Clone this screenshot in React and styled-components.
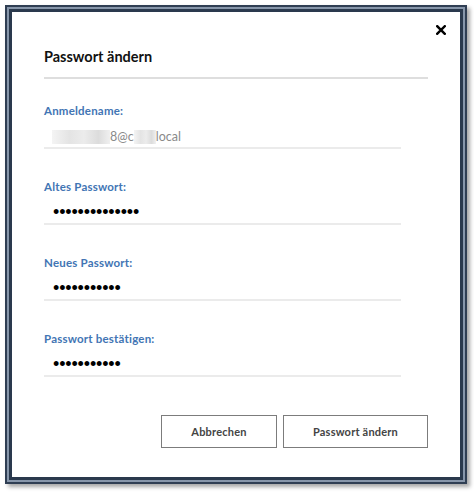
import React from "react";
import styled, { createGlobalStyle } from "styled-components";

const Global = createGlobalStyle`
  html, body { margin: 0; padding: 0; background: #ffffff; }
  body { font-family: Lato, "Open Sans", Arial, sans-serif; }
`;

const Page = styled.div`
  width: 474px;
  height: 493px;
  padding: 5px;
  box-sizing: border-box;
`;

const Frame = styled.div`
  position: relative;
  width: 462px;
  height: 479px;
  box-sizing: border-box;
  border: 2px solid #2f3e53;
  background: #ffffff;
  box-shadow: inset 0 0 0 2px #8796aa, inset 0 0 0 5px #2a394d,
    3px 3px 4px rgba(0, 0, 0, 0.35);
  padding: 5px;
  display: flex;
  flex-direction: column;
`;

const Inner = styled.div`
  padding: 0 32px;
  display: flex;
  flex-direction: column;
  flex: 1;
`;

const CloseButton = styled.button`
  position: absolute;
  top: 16px;
  right: 18px;
  width: 13px;
  height: 13px;
  padding: 0;
  border: 0;
  background: transparent;
  display: flex;
  align-items: center;
  justify-content: center;
  cursor: pointer;
`;

const Header = styled.div`
  padding: 35px 0 10px;
  border-bottom: 2px solid #dedede;
`;

const Title = styled.h2`
  margin: 0;
  font-size: 14.5px;
  line-height: 20px;
  font-weight: 700;
  color: #111;
`;

const Fields = styled.div`
  display: flex;
  flex-direction: column;
  gap: 31px;
  padding-top: 25px;
  width: 357px;
`;

const Field = styled.div`
  display: flex;
  flex-direction: column;
  border-bottom: 2px solid #ebebeb;
`;

const Label = styled.label`
  font-size: 11.5px;
  letter-spacing: 0.2px;
  line-height: 14px;
  font-weight: 700;
  color: #4275b4;
`;

const Value = styled.div`
  margin-top: 8px;
  height: 21px;
  padding-left: 8px;
  display: flex;
  align-items: center;
  font-size: 12.5px;
  color: #8a8a8a;
  white-space: nowrap;
`;

const Blur = styled.span`
  display: inline-block;
  height: 14px;
  width: ${(p) => p.$w}px;
  background: linear-gradient(
    90deg,
    #f4f4f4 0%,
    #e4e4e4 30%,
    #ececec 55%,
    #dcdcdc 80%,
    #f0f0f0 100%
  );
`;

const Dots = styled.span`
  font-family: "Liberation Sans", Arial, sans-serif;
  font-size: 18px;
  letter-spacing: -0.15px;
  line-height: 21px;
  color: #000;
  padding-left: 1px;
`;

const Actions = styled.div`
  margin-top: 38px;
  display: flex;
  justify-content: flex-end;
  gap: 6px;
`;

const Button = styled.button`
  height: 33px;
  width: ${(p) => p.$w}px;
  box-sizing: border-box;
  border: 1px solid #7c7c7c;
  background: #fff;
  font-family: Lato, "Open Sans", Arial, sans-serif;
  font-size: 11px;
  letter-spacing: 0.2px;
  font-weight: 700;
  color: #444;
  cursor: pointer;
`;

export default function App() {
  return (
    <>
      <Global />
      <Page>
        <Frame>
          <CloseButton aria-label="Schließen">
            <svg width="10" height="10" viewBox="0 0 10 10">
              <path
                d="M1.2 1.2 L8.8 8.8 M8.8 1.2 L1.2 8.8"
                stroke="#000"
                strokeWidth="2.4"
                strokeLinecap="square"
              />
            </svg>
          </CloseButton>
          <Inner>
            <Header>
              <Title>Passwort ändern</Title>
            </Header>
            <Fields>
              <Field>
                <Label>Anmeldename:</Label>
                <Value>
                  <Blur $w={58} />
                  8@c
                  <Blur $w={22} />
                  local
                </Value>
              </Field>
              <Field>
                <Label>Altes Passwort:</Label>
                <Value>
                  <Dots>••••••••••••••</Dots>
                </Value>
              </Field>
              <Field>
                <Label>Neues Passwort:</Label>
                <Value>
                  <Dots>•••••••••••</Dots>
                </Value>
              </Field>
              <Field>
                <Label>Passwort bestätigen:</Label>
                <Value>
                  <Dots>•••••••••••</Dots>
                </Value>
              </Field>
            </Fields>
            <Actions>
              <Button $w={116}>Abbrechen</Button>
              <Button $w={145}>Passwort ändern</Button>
            </Actions>
          </Inner>
        </Frame>
      </Page>
    </>
  );
}
